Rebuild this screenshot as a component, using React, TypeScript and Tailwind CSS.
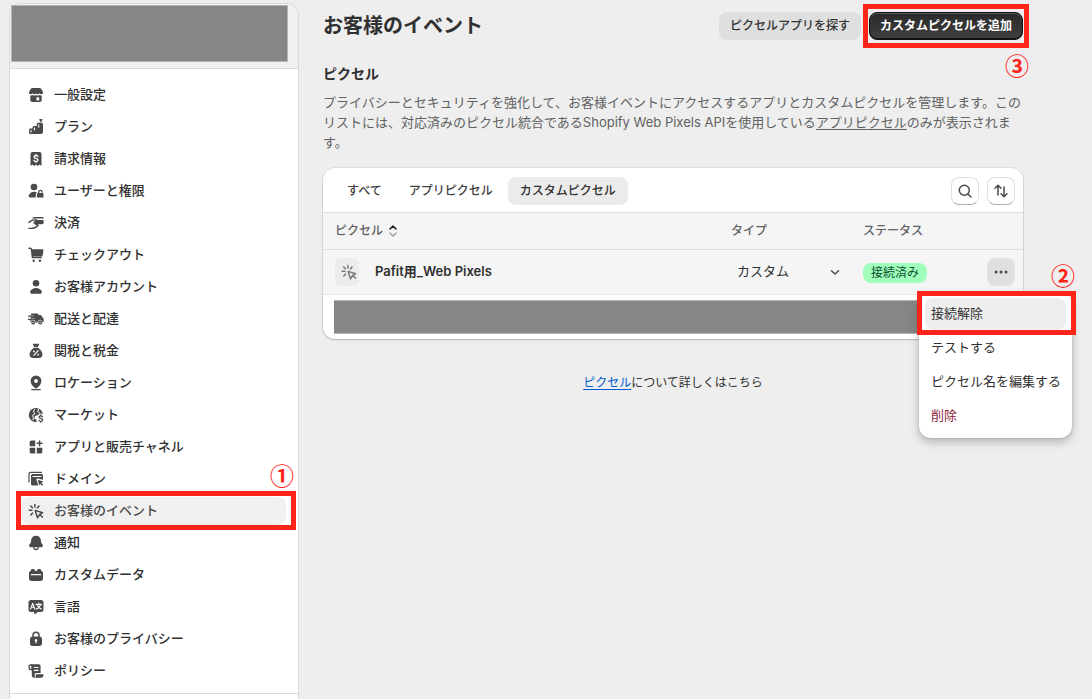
import type { ReactNode } from "react";

function Icon({ children }: { children: ReactNode }) {
  return (
    <svg viewBox="0 0 20 20" className="size-5 shrink-0" fill="currentColor" aria-hidden="true">
      {children}
    </svg>
  );
}

const line = {
  fill: "none",
  strokeWidth: 1.5,
  strokeLinecap: "round" as const,
  strokeLinejoin: "round" as const,
};

function ClickShape() {
  return (
    <g {...line} stroke="currentColor">
      <path d="M8.9 3.400v2.600M3.200 9.300h2.700M4.700 5l1.800 1.800M13 5l-1.600 1.900M6.600 12l-1.800 1.900" />
      <path d="M9.200 9.400l7.400 2.300-2.800 1.700 2.600 2.700M9.200 9.400l2.300 7.300 2.300-3.300" />
    </g>
  );
}

const icons = {
  store: (
    <Icon>
      <path d="M6.200 3h7.600c.6 0 1 .3 1.300.8l1.800 3c.5 1.200-.2 2.500-1.500 2.500-.9 0-1.500-.5-1.900-1.100-.4.7-1.100 1.100-1.800 1.100S10.300 8.900 10 8.200c-.3.7-1 1.100-1.700 1.100S6.900 8.900 6.500 8.200C6.100 8.800 5.500 9.300 4.600 9.300c-1.300 0-2-1.300-1.500-2.500l1.800-3c.3-.5.7-.8 1.300-.8z" />
      <path d="M4.300 10.400c.9.100 1.700-.1 2.300-.5 1.100.7 2.300.7 3.400 0 1.100.7 2.300.7 3.400 0 .6.4 1.400.6 2.300.5v4.600a2 2 0 0 1-2 2H6.300a2 2 0 0 1-2-2z" />
      <rect x="10.400" y="12.200" width="2.800" height="3.300" rx=".6" fill="#fff" />
    </Icon>
  ),
  plan: (
    <Icon>
      <path d="M13.300 2h3.500l-1 1.200 1 1.200h-2.300v1.400h.9c.9 0 1.600.7 1.600 1.600v7.600c0 1.100-.9 2-2 2H4.600A1.600 1.600 0 0 1 3 15.400v-2.300c0-.9.700-1.600 1.600-1.600h2v-1c0-.9.7-1.600 1.600-1.600h2.500V7.400c0-.9.7-1.600 1.600-1.600h1.900z" />
      <path d="M5 13.300v1.700M8.500 10.900v2M12.700 7.800v2.400" {...line} stroke="#fff" strokeWidth={1.1} />
    </Icon>
  ),
  billing: (
    <Icon>
      <path d="M6.500 3h7a2 2 0 0 1 2 2v12l-2-1.500-1.800 1.500L10 15.500 8.300 17l-1.800-1.500-2 1.500V5a2 2 0 0 1 2-2z" />
      <path d="M12 7.500c-.4-.7-1.100-1-2-1-1.100 0-1.900.5-1.900 1.400 0 2.100 3.900.9 3.900 3.100 0 .9-.9 1.500-2 1.500s-1.800-.4-2.200-1.200M10 5.400v1.100M10 12.500v1.100" {...line} stroke="#fff" strokeWidth={1.3} />
    </Icon>
  ),
  users: (
    <Icon>
      <circle cx="8" cy="6" r="3.300" />
      <path d="M8 10.800c1.200 0 2.200.3 3 .8-.9.600-1.200 1.300-1.200 2.300v2.600H4c-1 0-1.700-.9-1.300-1.900 1-2.400 2.900-3.800 5.300-3.800z" />
      <rect x="10.900" y="11.900" width="6.600" height="4.700" rx="1.200" />
      <path d="M12.700 11.900v-.900a1.700 1.700 0 0 1 3.400 0v.2" {...line} stroke="currentColor" strokeWidth={1.3} />
    </Icon>
  ),
  payments: (
    <Icon>
      <path d="M8.600 4h8a1 1 0 0 1 1 1v.4H6.100C6.900 4.500 7.600 4 8.600 4z" />
      <path d="M9.500 6.900h8.100v2.900a1.400 1.400 0 0 1-1.400 1.400h-3.700l-1.900 1.300L8.200 11z" />
      <path d="M2.800 9.400 6 7.300c.5-.3 1-.4 1.500-.4h3L8 9.900M2.900 15.400h2.500c2.700 0 4.900-1 6.700-3.200" {...line} stroke="currentColor" strokeWidth={1.4} />
    </Icon>
  ),
  cart: (
    <Icon>
      <path d="M3 3.300h1.200c.7 0 1.200.5 1.300 1.100l1 8.200h8.700" {...line} stroke="currentColor" />
      <path d="M5.400 4.300h11c.6 0 1.100.5 1 1.100l-.7 5c-.1.700-.7 1.200-1.400 1.200H6.200z" />
      <circle cx="7.700" cy="15.800" r="1.200" />
      <circle cx="13.900" cy="15.800" r="1.200" />
    </Icon>
  ),
  person: (
    <Icon>
      <circle cx="10" cy="6.200" r="3.300" />
      <path d="M10 11c2.700 0 4.800 1.300 5.800 3.600.4 1-.3 2.100-1.400 2.100H5.600c-1.100 0-1.800-1.100-1.400-2.100C5.200 12.300 7.300 11 10 11z" />
    </Icon>
  ),
  truck: (
    <Icon>
      <path d="M5.300 4.500h5.700c.8 0 1.500.6 1.500 1.400h1.700c.6 0 1.100.3 1.400.8l.9 1.800c.7.300 1.200.9 1.200 1.700v1.700a1.500 1.500 0 0 1-1.500 1.500H5.500c-.8 0-1.200-.5-1.200-1.300v-1H9V9.600H4.500V7.800H8V6.600H4.800z" />
      <path d="M2.600 7.200h6M2.400 10.300h7" {...line} stroke="currentColor" strokeWidth={1.300} />
      <circle cx="7.200" cy="13.400" r="2.300" stroke="#fff" strokeWidth=".6" />
      <circle cx="14.200" cy="13.400" r="2.300" stroke="#fff" strokeWidth=".6" />
      <circle cx="7.200" cy="13.400" r=".6" fill="#fff" />
      <circle cx="14.200" cy="13.400" r=".6" fill="#fff" />
    </Icon>
  ),
  tax: (
    <Icon>
      <path d="M7.500 2.700h5c.5 0 .8.500.6.900l-1.200 2.400H8.100L6.900 3.600c-.2-.4.100-.9.600-.9z" />
      <path d="M7.800 6.700h4.400c2.300 1.900 4.300 4.300 4.300 6.700 0 2.200-1.700 3.600-4 3.600H7.500c-2.300 0-4-1.400-4-3.600 0-2.400 2-4.800 4.300-6.700z" />
      <path d="M12.200 9.700l-4.400 4.600" {...line} stroke="#fff" strokeWidth={1.200} />
      <circle cx="7.900" cy="10.400" r=".9" fill="#fff" />
      <circle cx="12.100" cy="13.700" r=".9" fill="#fff" />
    </Icon>
  ),
  location: (
    <Icon>
      <path fillRule="evenodd" d="M10 2.500a5.400 5.400 0 0 1 5.400 5.400c0 2.900-2 5.100-4.300 7.100a1.700 1.700 0 0 1-2.200 0c-2.300-2-4.300-4.200-4.300-7.100A5.400 5.400 0 0 1 10 2.500zm0 3.600a1.900 1.900 0 1 0 0 3.800 1.900 1.900 0 0 0 0-3.800z" />
      <path d="M5.800 16.700h8.400" {...line} stroke="currentColor" strokeWidth={1.300} />
    </Icon>
  ),
  market: (
    <Icon>
      <path d="M10 3a7 7 0 1 0 .900 13.900c-.5-.6-.7-1.300-.5-2.100L8.400 13.400 9 11l2.600-.7c.8-1.100 2.300-1.600 5.300-1.200A7 7 0 0 0 10 3z" />
      <path d="M8.300 4.600l-.8 2.700 1.600 1.300-2.500 1.700.8 2.500-.4 2.100M12.400 4.200l-.6 2.600 2 1.300" {...line} stroke="#fff" strokeWidth={1} />
      <path d="M16.300 11.600c-.4-.6-.9-.8-1.600-.8-.9 0-1.600.5-1.600 1.300 0 1.800 3.500.9 3.500 2.800 0 .9-.8 1.400-1.800 1.400-.8 0-1.500-.3-1.900-1M14.800 9.800v1M14.800 16.300v1" {...line} stroke="#fff" strokeWidth={2.600} />
      <path d="M16.300 11.600c-.4-.6-.9-.8-1.600-.8-.9 0-1.600.5-1.600 1.300 0 1.800 3.500.9 3.500 2.800 0 .9-.8 1.400-1.800 1.400-.8 0-1.500-.3-1.900-1M14.800 9.800v1M14.800 16.300v1" {...line} stroke="currentColor" strokeWidth={1.300} />
    </Icon>
  ),
  apps: (
    <Icon>
      <path d="M5.500 3.500h3.700v5.700H3.700V5.300c0-1 .8-1.800 1.800-1.800zM3.700 10.800h5.500v5.700H5.500c-1 0-1.800-.8-1.800-1.800zM10.800 10.800h5.500v3.900c0 1-.8 1.800-1.800 1.800h-3.700z" />
      <path d="M13.600 3.900v4.800M11.200 6.300H16" {...line} stroke="currentColor" />
    </Icon>
  ),
  domain: (
    <Icon>
      <path d="M3 13V5.200c0-1 .8-1.800 1.800-1.800h10.700" {...line} stroke="currentColor" strokeWidth={1.200} />
      <path fillRule="evenodd" d="M6.500 5h9A1.500 1.500 0 0 1 17 6.500v4.300l-5-1.200c-1-.3-1.800.6-1.500 1.500l1.700 5.400H6.500A1.500 1.500 0 0 1 5 15V6.500A1.500 1.500 0 0 1 6.500 5zm.1 2.100v1h8.800v-1z" />
      <path d="M11.700 10.700l5.600 1.700-1.900 1.300 1.800 2-1.200 1.100-1.800-2-1.100 1.800z" />
    </Icon>
  ),
  click: (
    <Icon>
      <ClickShape />
    </Icon>
  ),
  bell: (
    <Icon>
      <path d="M10 2.700c2.700 0 4.700 1.900 4.900 4.500l.2 2.300 1.600 2.300c.6 1-.1 2.400-1.300 2.400H4.600c-1.200 0-1.900-1.400-1.300-2.400l1.600-2.300.2-2.300c.2-2.600 2.200-4.500 4.900-4.500z" />
      <path d="M7.900 14.600a2.100 2.100 0 0 0 4.200 0" {...line} stroke="currentColor" strokeWidth={1.300} />
    </Icon>
  ),
  data: (
    <Icon>
      <path d="M5 5.200c0-.7.500-1.200 1.200-1.200h1.300c.7 0 1.200.5 1.200 1.200v.5h2.600v-.5c0-.7.5-1.200 1.200-1.200h1.300c.7 0 1.200.5 1.200 1.200v.6c1.100.2 2 1.100 2 2.300v5.500a2.400 2.400 0 0 1-2.400 2.400H5.400A2.400 2.400 0 0 1 3 13.600V8.100c0-1.200.9-2.100 2-2.300z" />
      <path d="M5.300 9.700h9.400" {...line} stroke="#fff" strokeWidth={1.200} />
    </Icon>
  ),
  language: (
    <Icon>
      <path d="M5 3h10a2.500 2.500 0 0 1 2.500 2.500v7A2.500 2.500 0 0 1 15 15h-3.200L9.500 16.900c-.6.500-1.300.1-1.300-.6V15H5a2.500 2.500 0 0 1-2.500-2.500v-7A2.500 2.500 0 0 1 5 3z" />
      <path d="M4.600 12l2.100-5.600L8.800 12M5.300 10.300h2.800M10 7.400h5.500M12.700 6v1.400M14.500 7.600c-.5 2-2 3.600-4.200 4.500M11.200 7.800c.6 1.900 2 3.400 4.200 4.300" {...line} stroke="#fff" strokeWidth={1.100} />
    </Icon>
  ),
  lock: (
    <Icon>
      <path d="M7 8V6.300a3 3 0 0 1 6 0V8" {...line} stroke="currentColor" />
      <path d="M6.500 7.500h7c1.400 0 2.500 1.100 2.500 2.500v4.500c0 1.400-1.100 2.500-2.500 2.500h-7A2.500 2.500 0 0 1 4 14.500V10c0-1.400 1.100-2.500 2.500-2.500z" />
      <circle cx="10" cy="11.300" r="1.200" fill="#fff" />
      <path d="M10 11.500v2.200" {...line} stroke="#fff" strokeWidth={1.200} />
    </Icon>
  ),
  policy: (
    <Icon>
      <path d="M5.300 3.300h7.300c1.100 0 2 .9 2 2v6.800H10c-1 0-1.300.8-1.300 1.600v3H8.100c-1.300 0-2.300-1-2.300-2.300V8.600H5.300z" />
      <path d="M5.800 4H4.600c-.9 0-1.500.7-1.500 1.500v1.700c0 .8.600 1.300 1.300 1.300h1.400" {...line} stroke="currentColor" strokeWidth={1.300} />
      <path d="M9.800 13.200h7.600v1.200c0 1.300-1 2.300-2.300 2.300H8.400c.9-.6 1.400-1.400 1.400-2.300z" />
      <path d="M8.300 6.500h3.800M8.300 9.300h3.800" {...line} stroke="#fff" strokeWidth={1.200} />
    </Icon>
  ),
};

const navItems: { label: string; icon: ReactNode; active?: boolean }[] = [
  { label: "一般設定", icon: icons.store },
  { label: "プラン", icon: icons.plan },
  { label: "請求情報", icon: icons.billing },
  { label: "ユーザーと権限", icon: icons.users },
  { label: "決済", icon: icons.payments },
  { label: "チェックアウト", icon: icons.cart },
  { label: "お客様アカウント", icon: icons.person },
  { label: "配送と配達", icon: icons.truck },
  { label: "関税と税金", icon: icons.tax },
  { label: "ロケーション", icon: icons.location },
  { label: "マーケット", icon: icons.market },
  { label: "アプリと販売チャネル", icon: icons.apps },
  { label: "ドメイン", icon: icons.domain },
  { label: "お客様のイベント", icon: icons.click, active: true },
  { label: "通知", icon: icons.bell },
  { label: "カスタムデータ", icon: icons.data },
  { label: "言語", icon: icons.language },
  { label: "お客様のプライバシー", icon: icons.lock },
  { label: "ポリシー", icon: icons.policy },
];

function Sidebar() {
  return (
    <aside className="flex w-[290px] shrink-0 flex-col rounded-t-xl border border-b-0 border-[#dadada] bg-white">
      <div className="h-[65px] rounded-t-xl border-b border-[#dadada] bg-[#f0f0f0] pt-px pr-2.5 pl-px">
        <div className="h-[57px] border border-[#b5b5b5] bg-[#868686]" />
      </div>
      <nav className="border-b border-[#dadada] px-3 pt-3 pb-2">
        <ul className="flex flex-col gap-1">
          {navItems.map((item) => (
            <li key={item.label} className="relative">
              <a
                href="#"
                className={
                  item.active
                    ? "flex h-7 items-center gap-2 rounded-lg bg-[#f0f0f0] px-1 text-[13px] font-medium text-[#4a4a4a]"
                    : "flex h-7 items-center gap-2 rounded-lg px-1 text-[13px] font-medium text-[#303030]"
                }
              >
                <span className="text-[#4a4a4a]">{item.icon}</span>
                {item.label}
              </a>
              {item.active && (
                <>
                  <div className="pointer-events-none absolute -top-1.5 -right-2.5 -bottom-[5px] -left-1.5 border-5 border-[#ff2419]" />
                  <Marker className="-top-9 -right-2">①</Marker>
                </>
              )}
            </li>
          ))}
        </ul>
      </nav>
    </aside>
  );
}

function Marker({ className, children }: { className: string; children: ReactNode }) {
  return (
    <span
      className={`pointer-events-none absolute font-['Noto_Sans_CJK_JP',sans-serif] text-2xl leading-7 font-bold text-[#ff2419] ${className}`}
    >
      {children}
    </span>
  );
}

function RowMenu() {
  return (
    <div className="relative ml-auto w-7">
      <button
        type="button"
        aria-label="その他の操作"
        className="flex size-7 items-center justify-center rounded-lg bg-[#e0e0e0] text-[#4a4a4a]"
      >
        <Icon>
          <circle cx="5" cy="10" r="1.500" />
          <circle cx="10" cy="10" r="1.500" />
          <circle cx="15" cy="10" r="1.500" />
        </Icon>
      </button>
      <Marker className="top-[3px] -right-[60px]">②</Marker>
      <div className="absolute top-[34px] -right-[57px] z-10 flex w-[153px] flex-col gap-0.5 rounded-xl bg-white p-1.5 text-[13px] whitespace-nowrap text-[#303030] shadow-[0_4px_10px_rgba(0,0,0,0.25),0_0_2px_rgba(0,0,0,0.2)]">
        <div className="relative">
          <button type="button" className="h-8 w-full rounded-lg bg-[#eeeeee] px-1.5 text-left">
            接続解除
          </button>
          <div className="pointer-events-none absolute -top-[7px] -right-2.5 -bottom-[5px] -left-2 border-5 border-[#ff2419]" />
        </div>
        <button type="button" className="h-8 px-1.5 text-left">
          テストする
        </button>
        <button type="button" className="h-8 px-1.5 text-left">
          ピクセル名を編集する
        </button>
        <button type="button" className="h-8 px-1.5 text-left text-[#8e1f3b]">
          削除
        </button>
      </div>
    </div>
  );
}

const toolButton =
  "flex size-7 items-center justify-center rounded-lg border border-[#e0e0e0] border-b-[#b0b0b0] bg-white text-[#4a4a4a]";

function PixelCard() {
  return (
    <section className="mt-4 rounded-xl bg-white shadow-[0_1px_2px_rgba(0,0,0,0.2),0_0_0_1px_rgba(0,0,0,0.06)]">
      <div className="flex h-[45px] items-center justify-between border-b border-[#dedede] pt-px pr-2 pl-3">
        <div className="flex gap-[3px] text-xs font-medium text-[#404040]">
          <button type="button" className="h-7 rounded-lg px-3">
            すべて
          </button>
          <button type="button" className="h-7 rounded-lg px-3">
            アプリピクセル
          </button>
          <button type="button" className="h-7 rounded-lg bg-[#ebebeb] px-3 text-[#303030]">
            カスタムピクセル
          </button>
        </div>
        <div className="flex gap-2">
          <button type="button" aria-label="検索" className={toolButton}>
            <Icon>
              <g {...line} stroke="currentColor">
                <circle cx="9.300" cy="9.300" r="5" />
                <path d="M13 13l3 3" />
              </g>
            </Icon>
          </button>
          <button type="button" aria-label="並べ替え" className={toolButton}>
            <Icon>
              <path d="M7 14V4.500M4 7.200l3-3 3 3M13 6v9.500M10 12.800l3 3 3-3" {...line} stroke="currentColor" />
            </Icon>
          </button>
        </div>
      </div>
      <table className="w-full table-fixed border-collapse text-left">
        <colgroup>
          <col />
          <col className="w-[132px]" />
          <col className="w-[104px]" />
          <col className="w-[68px]" />
        </colgroup>
        <thead>
          <tr className="h-9 border-b border-[#dedede] bg-[#f5f5f5] text-xs text-[#616161]">
            <th className="px-3 font-medium" aria-sort="ascending">
              <span className="flex items-center gap-1">
                ピクセル
                <svg viewBox="0 0 12 16" className="h-4 w-3" aria-hidden="true">
                  <path d="M3 6l3-3 3 3" {...line} stroke="#1a1a1a" />
                  <path d="M3 10l3 3 3-3" {...line} stroke="#a0a0a0" />
                </svg>
              </span>
            </th>
            <th className="px-3 font-medium">タイプ</th>
            <th className="px-3 font-medium">ステータス</th>
            <th aria-label="操作" />
          </tr>
        </thead>
        <tbody>
          <tr className="h-[45px] border-b border-[#e6e6e6] bg-[#f5f5f5]">
            <td className="px-3">
              <div className="flex items-center gap-4">
                <span className="flex h-7 w-6 items-center justify-center rounded-md bg-[#ececec] pl-1 text-[#777777]">
                  <Icon>
                    <ClickShape />
                  </Icon>
                </span>
                <span className="text-[13px] font-semibold text-[#303030]">Pafit用_Web Pixels</span>
              </div>
            </td>
            <td className="pr-1 pl-3">
              <div className="relative flex items-center">
                <select
                  aria-label="タイプ"
                  defaultValue="custom"
                  className="h-7 w-full appearance-none bg-transparent pl-1.5 text-[13px] text-[#303030]"
                >
                  <option value="custom">カスタム</option>
                </select>
                <svg viewBox="0 0 20 20" className="pointer-events-none absolute right-0.5 size-5" aria-hidden="true">
                  <path d="M6.500 8.700l3.500 3.300 3.500-3.300" {...line} stroke="#4a4a4a" />
                </svg>
              </div>
            </td>
            <td className="px-3">
              <span className="inline-flex h-5 items-center rounded-lg bg-[#a0ffba] px-2 align-middle text-xs whitespace-nowrap text-[#0c5132]">
                接続済み
              </span>
            </td>
            <td className="pr-2">
              <RowMenu />
            </td>
          </tr>
          <tr className="h-[45px]">
            <td colSpan={4} className="pr-3 pl-[11px]">
              <div className="h-[34px] border-y border-[#b5b5b5] bg-[#868686]" />
            </td>
          </tr>
        </tbody>
      </table>
    </section>
  );
}

export default function App() {
  return (
    <div className="flex min-h-screen bg-[#eeeeee] pt-[3px] pl-[9px] font-['Inter','Noto_Sans_CJK_JP',sans-serif] text-[#303030]">
      <Sidebar />
      <main className="min-w-0 flex-1 pt-[9px] pr-[69px] pl-6">
        <header className="flex items-center justify-between">
          <h1 className="text-xl leading-7 font-semibold">お客様のイベント</h1>
          <div className="flex gap-2 text-xs">
            <button type="button" className="h-7 rounded-lg bg-[#dfdfdf] px-[11px] font-medium">
              ピクセルアプリを探す
            </button>
            <div className="relative">
              <button
                type="button"
                className="h-7 rounded-lg border border-[#111111] bg-linear-to-b from-[#2a2a2a] to-[#404040] px-2.5 font-semibold text-white shadow-[inset_0_1px_0_#5a5a5a,inset_0_-1px_0_#111111]"
              >
                カスタムピクセルを追加
              </button>
              <div className="pointer-events-none absolute -inset-x-1.5 -inset-y-2 border-5 border-[#ff2419]" />
              <Marker className="top-[39px] -right-1.5">③</Marker>
            </div>
          </div>
        </header>
        <h2 className="mt-6 text-sm leading-5 font-semibold">ピクセル</h2>
        <p className="mt-2 -mr-1 text-[13px] leading-5 text-[#616161]">
          プライバシーとセキュリティを強化して、お客様イベントにアクセスするアプリとカスタムピクセルを管理します。このリストには、対応済みのピクセル統合であるShopify Web Pixels APIを使用している
          <a href="#" className="underline underline-offset-2">
            アプリピクセル
          </a>
          のみが表示されます。
        </p>
        <PixelCard />
        <p className="mt-9 text-center text-xs leading-4">
          <a href="#" className="text-[#005bd3] underline underline-offset-2">
            ピクセル
          </a>
          について詳しくはこちら
        </p>
      </main>
    </div>
  );
}
